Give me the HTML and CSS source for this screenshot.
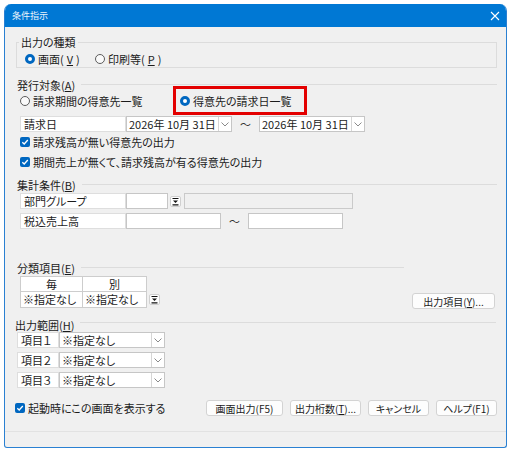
FILE: index.html
```html
<!DOCTYPE html>
<html lang="ja">
<head>
  <meta charset="UTF-8">
  <title>条件指示</title>
  <link rel="stylesheet" href="styles.css">
</head>
<body>

  <div class="dialog">
    <!-- タイトルバー -->
    <div class="titlebar">
      <span class="title">条件指示</span>
      <svg class="close" viewBox="0 0 10 10" width="10" height="10">
        <path d="M1 1L9 9M9 1L1 9" stroke="#fff" stroke-width="1.1" fill="none"/>
      </svg>
    </div>

    <div class="content">
      <!-- 出力の種類 -->
      <fieldset class="group">
        <legend>出力の種類</legend>
        <div class="row">
          <label class="radio on w70"><span class="dot"></span>画面(<u>V</u>)</label>
          <label class="radio"><span class="dot"></span>印刷等(<u>P</u>)</label>
        </div>
      </fieldset>

      <!-- 発行対象 -->
      <div class="heading"><span>発行対象(<u>A</u>)</span><span class="rule"></span></div>
      <div class="row target">
        <label class="radio w160"><span class="dot"></span>請求期間の得意先一覧</label>
        <label class="radio on marked"><span class="dot"></span>得意先の請求日一覧</label>
      </div>

      <div class="row line date-row">
        <span class="tag w106">請求日</span>
        <span class="field combo w106"><span class="val">2026年 10月 31日</span><span class="arrow"><svg viewBox="0 0 8 5" width="8" height="5"><path d="M0.5 0.5L4 4L7.5 0.5" stroke="#8a8a8a" fill="none"/></svg></span></span>
        <span class="tilde">〜</span>
        <span class="field combo w106"><span class="val">2026年 10月 31日</span><span class="arrow"><svg viewBox="0 0 8 5" width="8" height="5"><path d="M0.5 0.5L4 4L7.5 0.5" stroke="#8a8a8a" fill="none"/></svg></span></span>
      </div>

      <label class="check first"><span class="box"><svg viewBox="0 0 10 10" width="10" height="10"><path d="M2.3 5.2L4.2 7L7.8 3" stroke="#fff" stroke-width="1.3" fill="none"/></svg></span>請求残高が無い得意先の出力</label>
      <label class="check second"><span class="box"><svg viewBox="0 0 10 10" width="10" height="10"><path d="M2.3 5.2L4.2 7L7.8 3" stroke="#fff" stroke-width="1.3" fill="none"/></svg></span>期間売上が無くて、請求残高が有る得意先の出力</label>

      <!-- 集計条件 -->
      <div class="heading sum"><span>集計条件(<u>B</u>)</span><span class="rule"></span></div>
      <div class="row line dept">
        <span class="tag w106">部門グループ</span>
        <span class="field w42"></span>
        <span class="pick"><svg viewBox="0 0 9 9" width="9" height="9"><path d="M1.5 1.5H7.5" stroke="#111" stroke-width="1"/><path d="M2 3.5H7L4.5 6Z" fill="#111"/><path d="M1.5 7.8H7.5" stroke="#111" stroke-width="1.2"/></svg></span>
        <span class="field off w169"></span>
      </div>
      <div class="row line sales">
        <span class="tag w106">税込売上高</span>
        <span class="field w95"></span>
        <span class="tilde">〜</span>
        <span class="field w95"></span>
      </div>

      <!-- 分類項目 -->
      <div class="class-block">
        <div class="class-left">
          <div class="heading"><span>分類項目(<u>E</u>)</span><span class="rule"></span></div>
          <div class="row table-row">
            <div class="grid">
              <div class="cell head">毎</div>
              <div class="cell head">別</div>
              <div class="cell">※指定なし</div>
              <div class="cell">※指定なし</div>
            </div>
            <span class="pick"><svg viewBox="0 0 9 9" width="9" height="9"><path d="M1.5 1.5H7.5" stroke="#111" stroke-width="1"/><path d="M2 3.5H7L4.5 6Z" fill="#111"/><path d="M1.5 7.8H7.5" stroke="#111" stroke-width="1.2"/></svg></span>
          </div>
        </div>
        <button class="btn items">出力項目(<u>Y</u>)...</button>
      </div>

      <!-- 出力範囲 -->
      <div class="heading range"><span>出力範囲(<u>H</u>)</span><span class="rule"></span></div>
      <div class="row item">
        <span class="tag w42">項目１</span>
        <span class="field combo w106"><span class="val">※指定なし</span><span class="arrow"><svg viewBox="0 0 8 5" width="8" height="5"><path d="M0.5 0.5L4 4L7.5 0.5" stroke="#8a8a8a" fill="none"/></svg></span></span>
      </div>
      <div class="row item">
        <span class="tag w42">項目２</span>
        <span class="field combo w106"><span class="val">※指定なし</span><span class="arrow"><svg viewBox="0 0 8 5" width="8" height="5"><path d="M0.5 0.5L4 4L7.5 0.5" stroke="#8a8a8a" fill="none"/></svg></span></span>
      </div>
      <div class="row item">
        <span class="tag w42">項目３</span>
        <span class="field combo w106"><span class="val">※指定なし</span><span class="arrow"><svg viewBox="0 0 8 5" width="8" height="5"><path d="M0.5 0.5L4 4L7.5 0.5" stroke="#8a8a8a" fill="none"/></svg></span></span>
      </div>

      <!-- 下部ボタン -->
      <div class="row actions">
        <label class="check"><span class="box"><svg viewBox="0 0 10 10" width="10" height="10"><path d="M2.3 5.2L4.2 7L7.8 3" stroke="#fff" stroke-width="1.3" fill="none"/></svg></span>起動時にこの画面を表示する</label>
        <div class="buttons">
          <button class="btn b77">画面出力(F5)</button>
          <button class="btn b71">出力桁数(<u>T</u>)...</button>
          <button class="btn b61">キャンセル</button>
          <button class="btn b61">ヘルプ(F1)</button>
        </div>
      </div>
    </div>

    <div class="footer"></div>
  </div>

</body>
</html>
```

FILE: styles.css
```css
html, body {
  margin: 0;
  padding: 0;
  background: #fff;
}

body {
  font-family: "Noto Sans CJK JP", "Noto Sans", sans-serif;
  font-size: 11px;
  line-height: 14px;
  color: #1b1b1b;
  font-feature-settings: "palt";
}

u {
  text-underline-offset: 1px;
}

.dialog {
  width: 503px;
  height: 444px;
  margin: 4px 0 0 4px;
  box-sizing: border-box;
  border: 1px solid #2a80d2;
  border-top: 0;
  border-radius: 7px 7px 3px 3px;
  background: #f0f0f0;
  overflow: hidden;
  display: flex;
  flex-direction: column;
}

.titlebar {
  height: 23px;
  flex: none;
  background: #0078d4;
  display: flex;
  align-items: center;
  padding: 0 6px 0 7px;
}

.title {
  color: #fff;
  font-size: 9px;
  opacity: 0.92;
}

.close {
  margin-left: auto;
}

.content {
  flex: 1;
  padding: 0 9px 0 11px;
}

.footer {
  height: 15px;
  flex: none;
  border-top: 1px solid #e2e2e2;
}

/* グループ枠 */
.group {
  margin: 8px 0 0;
  padding: 2px 8px 1px;
  border: 1px solid #dcdcdc;
}

.group legend {
  margin-left: -6px;
  padding: 0 2px;
}

.heading {
  display: flex;
  align-items: center;
  height: 14px;
  margin: 10px 0 0 1px;
}

.heading .rule {
  flex: 1;
  height: 0;
  border-top: 1px solid #dcdcdc;
  margin: -1px 0 0 6px;
}

.heading.sum {
  margin-top: 9px;
}

.row {
  display: flex;
  align-items: center;
}

.w70 { width: 70px; }
.w160 { width: 160px; }
.w42 { width: 42px; }
.w95 { width: 95px; }
.w106 { width: 106px; }
.w169 { width: 169px; }

/* ラジオボタン */
.radio {
  display: inline-flex;
  align-items: center;
  gap: 3px;
  height: 15px;
}

.radio .dot {
  width: 10px;
  height: 10px;
  box-sizing: border-box;
  border-radius: 50%;
  border: 1px solid #5c5c5c;
  background: #fafafa;
}

.radio.on .dot {
  border: 3px solid #0067c0;
  background: #fff;
}

.target {
  margin: 1px 0 0 4px;
}

.marked {
  outline: 3px solid #e30000;
  outline-offset: 4px;
  padding-right: 8px;
}

/* 入力欄 */
.line {
  margin-left: 4px;
}

.tag,
.field {
  height: 16px;
  box-sizing: border-box;
  background: #fff;
  display: flex;
  align-items: center;
}

.tag {
  border: 1px solid #dedede;
  padding: 0 3px;
}

.field {
  border: 1px solid #c6c6c6;
}

.field.off {
  background: #f0f0f0;
  border-color: #cacaca;
}

.combo .val {
  flex: 1;
  padding-left: 2px;
  white-space: nowrap;
}

.combo .arrow {
  width: 12px;
  height: 14px;
  border-left: 1px solid #d6d6d6;
  display: flex;
  align-items: center;
  justify-content: center;
}

.tilde {
  width: 27px;
  text-align: center;
  color: #333;
}

.date-row {
  margin-top: 8px;
}

.pick {
  width: 11px;
  height: 11px;
  margin: 0 3px 0 2px;
  box-sizing: border-box;
  border: 1px solid #d0d0d0;
  border-radius: 2px;
  background: #fff;
  display: flex;
  align-items: center;
  justify-content: center;
}

.dept {
  margin-top: 1px;
}

.sales {
  margin-top: 4px;
}

/* チェックボックス */
.check {
  display: flex;
  align-items: center;
  gap: 3px;
  height: 14px;
  margin-left: 4px;
}

.check .box {
  width: 10px;
  height: 10px;
  border-radius: 2px;
  background: #0067c0;
  display: flex;
}

.check.first {
  margin-top: 3px;
}

.check.second {
  margin-top: 6px;
}

/* 分類項目 */
.class-block {
  display: flex;
  align-items: flex-end;
  margin-top: 32px;
}

.class-left {
  width: 388px;
}

.class-left .heading {
  margin-top: 0;
}

.table-row {
  margin: 1px 0 0 4px;
}

.grid {
  display: grid;
  grid-template-columns: 62px 64px;
  grid-template-rows: 15px 16px;
  border-top: 1px solid #cdcdcd;
  border-left: 1px solid #cdcdcd;
  background: #fff;
}

.cell {
  border-right: 1px solid #cdcdcd;
  border-bottom: 1px solid #cdcdcd;
  padding-left: 2px;
  white-space: nowrap;
}

.cell.head {
  text-align: center;
  padding-left: 0;
  line-height: 14px;
}

.table-row .pick {
  align-self: flex-end;
  margin-bottom: 3px;
}

.btn {
  height: 16px;
  padding: 0;
  box-sizing: border-box;
  border: 1px solid #d3d3d3;
  border-radius: 3px;
  background: #fdfdfd;
  font-family: inherit;
  font-size: 10px;
  line-height: 13px;
  color: #1b1b1b;
  font-feature-settings: "palt";
}

.btn.items {
  width: 83px;
  margin: 0 2px -1px auto;
}

/* 出力範囲 */
.range {
  margin: 10px 0 0 -1px;
  align-items: flex-start;
}

.range .rule {
  margin-top: 4px;
  margin-right: 1px;
}

.item {
  margin: 0 0 4px 1px;
}

.actions {
  margin: 12px 0 0 -1px;
}

.actions .check {
  margin-left: 0;
}

.buttons {
  display: flex;
  gap: 7px;
  margin-left: auto;
}

.b77 { width: 77px; }
.b71 { width: 71px; }
.b61 { width: 61px; }
```
